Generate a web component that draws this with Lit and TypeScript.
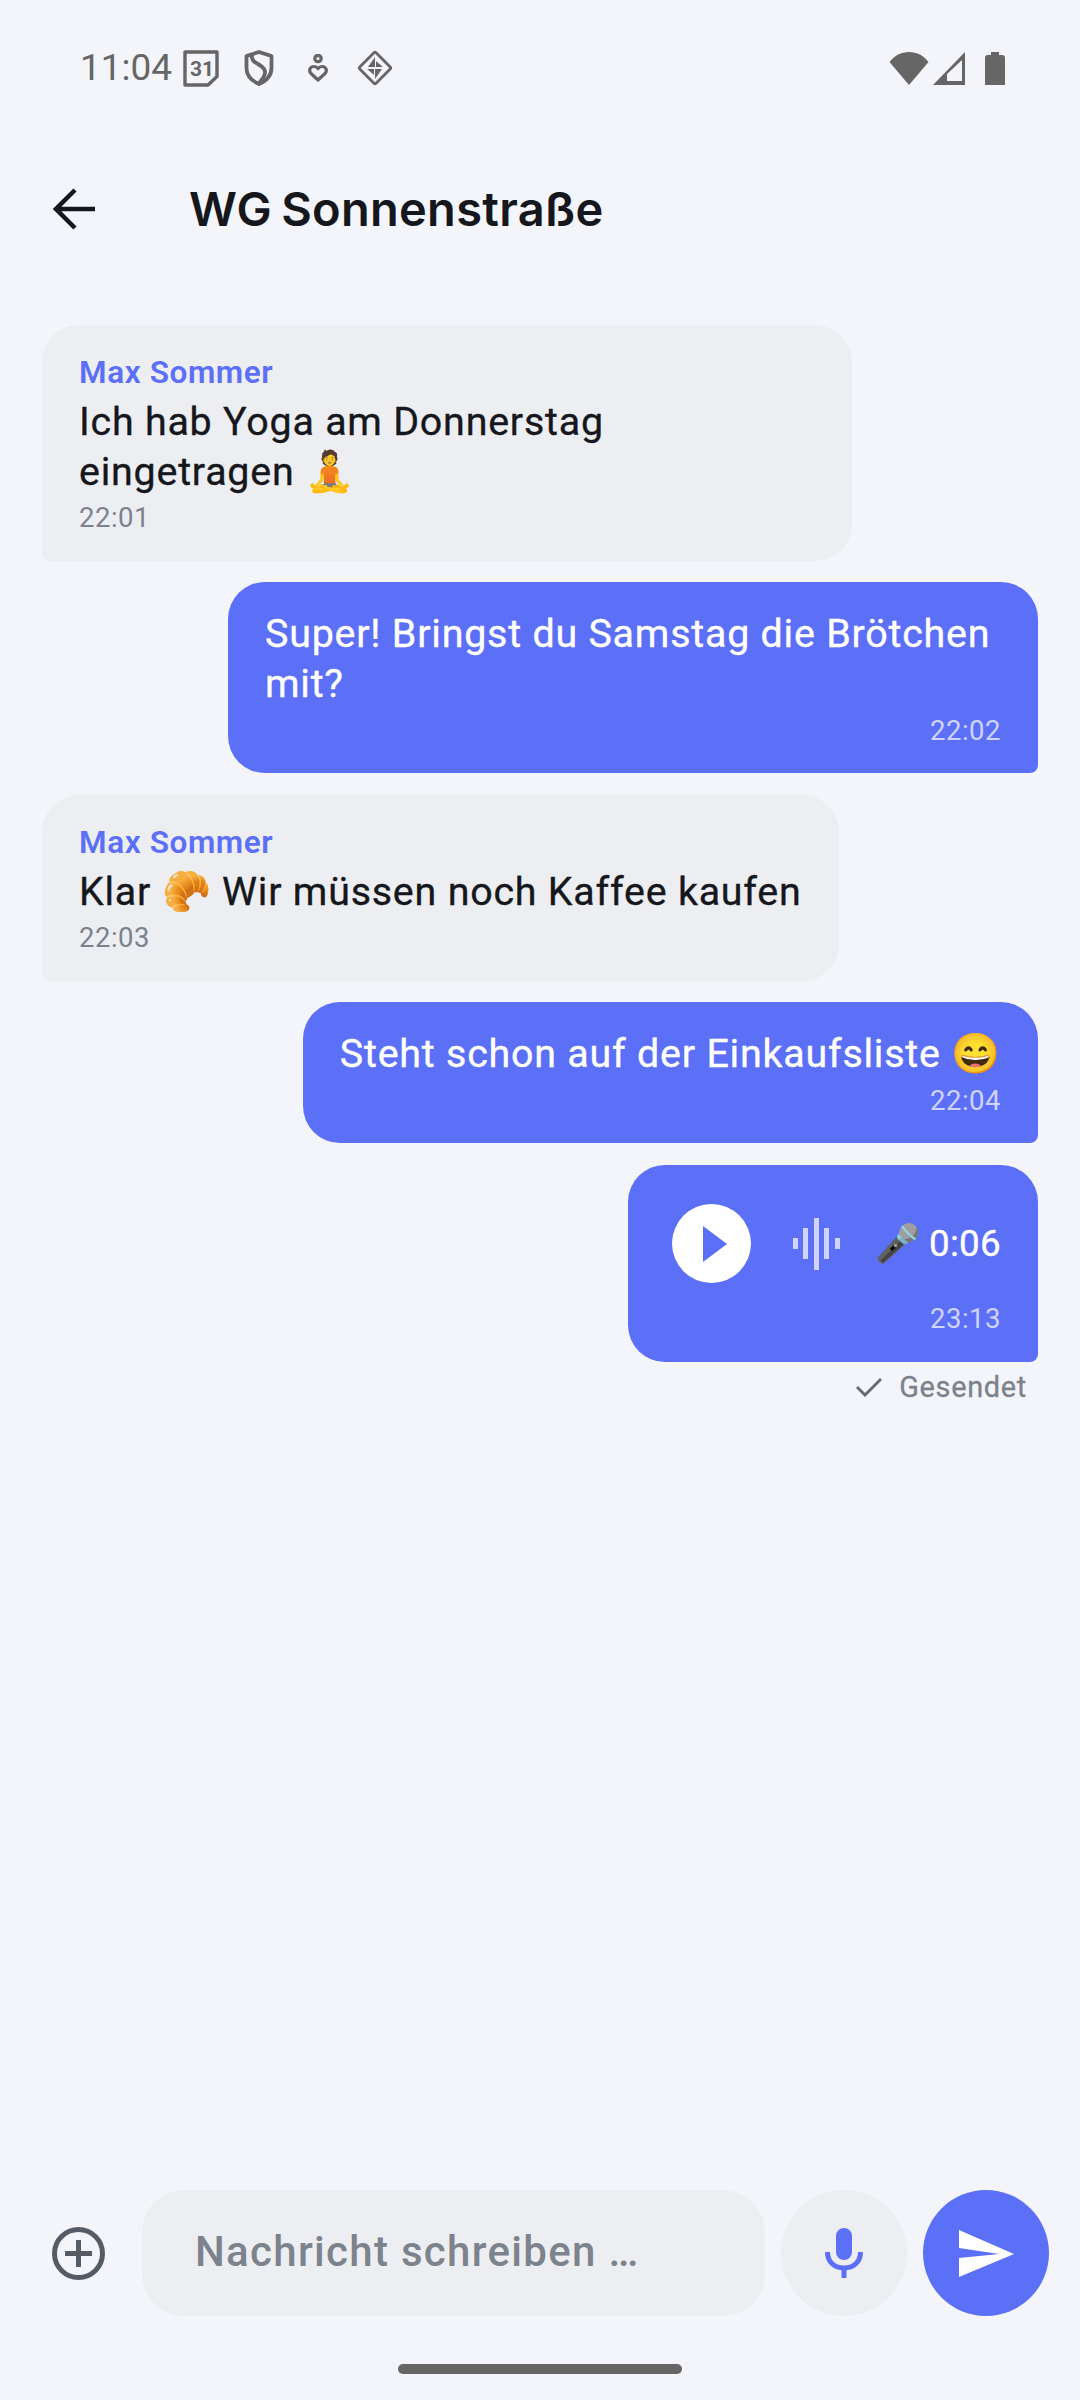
import { LitElement, css, html } from "lit";
import { customElement } from "lit/decorators.js";

interface Message {
  sender?: string;
  text: string;
  time: string;
}

const waveBars = [11, 31, 52, 31, 11];

@customElement("app-root")
export class AppRoot extends LitElement {
  static styles = css`
    :host {
      display: flex;
      flex-direction: column;
      width: 1080px;
      height: 2400px;
      background: #f4f5fa;
      font-family: Roboto, "Noto Sans", sans-serif;
      color: #15171c;
      overflow: hidden;
    }

    svg {
      display: block;
      flex: none;
    }

    .status {
      height: 136px;
      display: flex;
      align-items: center;
      padding: 0 75px 0 80px;
      color: #666666;
      box-sizing: border-box;
    }

    .clock {
      font-size: 37px;
      line-height: 40px;
      margin-right: 11px;
    }

    .status-left {
      display: flex;
      align-items: center;
    }

    .status-right {
      margin-left: auto;
      display: flex;
      align-items: center;
      gap: 4px;
    }

    .app-bar {
      height: 146px;
      display: flex;
      align-items: center;
      padding-left: 53px;
    }

    .app-bar h1 {
      margin: 0 0 0 94px;
      font-family: Inter, sans-serif;
      font-size: 47px;
      line-height: 56px;
      font-weight: 600;
      letter-spacing: 0.3px;
      word-spacing: -3px;
    }

    .thread {
      flex: 1;
      display: flex;
      flex-direction: column;
      gap: 21.5px;
      padding: 42.9px 42px 0 42px;
    }

    .bubble {
      max-width: 810px;
      box-sizing: border-box;
      padding: 27px 37px 26.5px;
      border-radius: 37px;
      font-size: 39.4px;
      line-height: 50px;
      letter-spacing: 0.78px;
    }

    .body {
      -webkit-text-stroke: 0.35px currentColor;
    }

    .in {
      align-self: flex-start;
      background: #edeef2;
      border-bottom-left-radius: 8px;
    }

    .out {
      align-self: flex-end;
      background: #5c6ff7;
      color: #ffffff;
      border-bottom-right-radius: 8px;
    }

    .sender {
      font-size: 31.5px;
      line-height: 40px;
      font-weight: 600;
      color: #5c6ff7;
      letter-spacing: 0.6px;
      margin-top: 1px;
      margin-bottom: 4px;
    }

    .time {
      font-size: 27.5px;
      line-height: 32px;
      letter-spacing: 0.5px;
      margin-top: 5.5px;
      color: #7c828c;
    }

    .out .time {
      text-align: right;
      color: #ced4fd;
    }

    .voice-row {
      display: flex;
      align-items: center;
      height: 104px;
      margin-bottom: 7.5px;
    }

    .play-slot {
      width: 93px;
      display: flex;
      justify-content: center;
    }

    .play {
      width: 79px;
      height: 79px;
      border-radius: 50%;
      background: #ffffff;
      display: flex;
      align-items: center;
      justify-content: center;
    }

    .wave {
      display: flex;
      align-items: center;
      gap: 5.5px;
      margin: 0 35px 0 35px;
    }

    .wave span {
      width: 5px;
      background: #ced4fd;
    }

    .voice-label {
      font-size: 36.75px;
      letter-spacing: 0.3px;
      word-spacing: -1.5px;
      white-space: nowrap;
      -webkit-text-stroke: 0.35px currentColor;
    }

    .delivery {
      align-self: flex-end;
      display: flex;
      align-items: center;
      gap: 17px;
      margin: -14.5px 11px 0 0;
      font-size: 28.9px;
      line-height: 36px;
      letter-spacing: 0.7px;
      color: #7c828c;
      -webkit-text-stroke: 0.3px currentColor;
    }

    .composer {
      height: 126px;
      display: flex;
      align-items: center;
      padding: 0 31px 0 52px;
      gap: 16px;
    }

    .add {
      margin-right: 21px;
    }

    .field {
      flex: 1;
      height: 122px;
      padding-bottom: 4px;
      display: flex;
      align-items: center;
      padding-left: 53px;
      background: #edeef2;
      border-radius: 42px;
      font-size: 42px;
      font-weight: 500;
      letter-spacing: 1.3px;
      color: #7c838d;
    }

    .round {
      width: 126px;
      height: 126px;
      border-radius: 50%;
      display: flex;
      align-items: center;
      justify-content: center;
      background: #edeef2;
    }

    .round.send {
      background: #5c6ff7;
    }

    .nav {
      height: 84px;
      display: flex;
      align-items: flex-start;
      justify-content: center;
      padding-top: 48px;
      box-sizing: border-box;
    }

    .nav span {
      width: 284px;
      height: 10px;
      border-radius: 5px;
      background: #666666;
    }
  `;

  private statusIcons() {
    return html`
      <svg width="36" height="37" viewBox="0 0 36 37" fill="none" stroke="#666" stroke-width="3.400">
        <path d="M2 2h32v24.500L25 35H2z" stroke-linejoin="round" />
        <text x="7" y="26" font-family="Roboto, sans-serif" font-size="21" font-weight="700" fill="#666" stroke="none">31</text>
      </svg>
      <svg style="margin-left:25px" width="30" height="36" viewBox="0 0 30 36" fill="none" stroke="#666" stroke-width="3.800">
        <path d="M15 2l12.500 4v12c0 7.500-5.500 13-12.500 16C8 31 2.500 25.500 2.500 18V6z" stroke-linejoin="round" />
        <path d="M8 4c-1 6 2 8 6 10 5 3 9 6 6 12-1 3-4 5-5 8" />
      </svg>
      <svg style="margin-left:34px" width="20" height="28" viewBox="0 0 20 28" fill="none" stroke="#666" stroke-width="3.200">
        <circle cx="10" cy="4.500" r="3.200" />
        <path d="M10 26L3 19.500c-3-3.500-.5-7 3-7 1.800 0 3.200 1 4 2.200.8-1.200 2.200-2.200 4-2.200 3.500 0 6 3.500 3 7z" stroke-linejoin="round" />
      </svg>
      <svg style="margin-left:28px" width="38" height="38" viewBox="0 0 38 38" fill="none">
        <rect x="7.500" y="7.500" width="23" height="23" rx="1.500" transform="rotate(45 19 19)" stroke="#666" stroke-width="2.800" />
        <path d="M19 8v10h-7zM19 30V20h7zM20 12l6 6h-6zM18 26l-6-6h6zM27 18h-6v-5zM11 20h6v5z" fill="#666" />
      </svg>
    `;
  }

  private systemIcons() {
    return html`
      <svg width="40" height="33" viewBox="0 0 40 33">
        <path d="M0.500 10C5.500 3.500 12 0 20 0s14.500 3.500 19.500 10L20 33z" fill="#666" />
      </svg>
      <svg width="33" height="33" viewBox="0 0 33 33">
        <path fill-rule="evenodd" d="M32 0v33H0zM29 8L14 22v7h15z" fill="#666" />
      </svg>
      <svg style="margin-left:15px" width="20" height="33" viewBox="0 0 20 33">
        <path d="M6 0h8v3h3a3 3 0 0 1 3 3v27H0V6a3 3 0 0 1 3-3h3z" fill="#666" />
      </svg>
    `;
  }

  private renderIncoming(message: Message) {
    return html`
      <div class="bubble in">
        ${message.sender ? html`<div class="sender">${message.sender}</div>` : ""}
        <div class="body">${message.text}</div>
        <div class="time">${message.time}</div>
      </div>
    `;
  }

  private renderOutgoing(message: Message) {
    return html`
      <div class="bubble out">
        <div class="body">${message.text}</div>
        <div class="time">${message.time}</div>
      </div>
    `;
  }

  protected render(): unknown {
    return html`
      <div class="status">
        <div class="status-left">
          <span class="clock">11:04</span>
          ${this.statusIcons()}
        </div>
        <div class="status-right">${this.systemIcons()}</div>
      </div>

      <header class="app-bar">
        <svg width="42" height="42" viewBox="0 0 42 42" fill="none" stroke="#15171c" stroke-width="4.500">
          <path d="M42 21H4M22 2L3 21l19 19" />
        </svg>
        <h1>WG Sonnenstraße</h1>
      </header>

      <main class="thread">
        ${this.renderIncoming({
          sender: "Max Sommer",
          text: "Ich hab Yoga am Donnerstag eingetragen 🧘",
          time: "22:01",
        })}
        ${this.renderOutgoing({ text: "Super! Bringst du Samstag die Brötchen mit?", time: "22:02" })}
        ${this.renderIncoming({
          sender: "Max Sommer",
          text: "Klar 🥐 Wir müssen noch Kaffee kaufen",
          time: "22:03",
        })}
        ${this.renderOutgoing({ text: "Steht schon auf der Einkaufsliste 😄", time: "22:04" })}

        <div class="bubble out">
          <div class="voice-row">
            <div class="play-slot">
              <div class="play">
                <svg width="24" height="36" viewBox="0 0 24 36" style="margin-left:7px">
                  <path d="M0 0l24 18L0 36z" fill="#5c6ff7" />
                </svg>
              </div>
            </div>
            <div class="wave">
              ${waveBars.map((h) => html`<span style="height:${h}px"></span>`)}
            </div>
            <span class="voice-label">🎤 0:06</span>
          </div>
          <div class="time">23:13</div>
        </div>

        <div class="delivery">
          <svg width="26" height="20" viewBox="0 0 26 20" fill="none" stroke="#666c75" stroke-width="3">
            <path d="M1 10l8 8L25 2" />
          </svg>
          <span>Gesendet</span>
        </div>
      </main>

      <div class="composer">
        <svg class="add" width="53" height="53" viewBox="0 0 53 53" fill="none" stroke="#555c66" stroke-width="5">
          <circle cx="26.500" cy="26.500" r="24" />
          <path d="M13 26.500h27M26.500 13v27" />
        </svg>
        <div class="field">Nachricht schreiben …</div>
        <div class="round">
          <svg width="38" height="50" viewBox="0 0 38 50">
            <rect x="11" y="0" width="16" height="32" rx="8" fill="#5c6ff7" />
            <path d="M2.500 24c0 10 7 16 16.500 16s16.500-6 16.500-16" fill="none" stroke="#5c6ff7" stroke-width="5" />
            <rect x="16.500" y="38" width="5" height="12" fill="#5c6ff7" />
          </svg>
        </div>
        <div class="round send">
          <svg width="55" height="47" viewBox="0 0 55 47">
            <path d="M0 0l55 24L0 47V28l40-4-40-6z" fill="#ffffff" />
          </svg>
        </div>
      </div>

      <div class="nav"><span></span></div>
    `;
  }
}
